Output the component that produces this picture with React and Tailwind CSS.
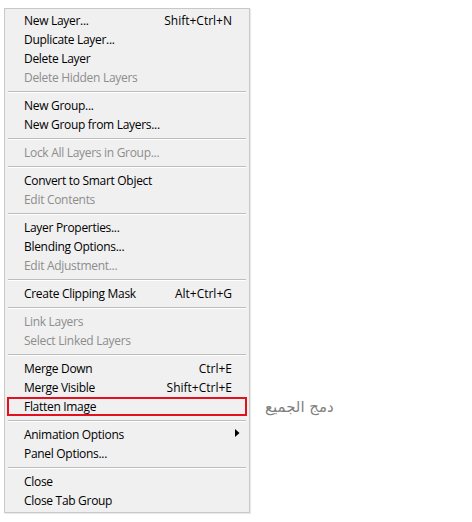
import React from "react";

const groups = [
  [
    { t: "New Layer...", s: "Shift+Ctrl+N" },
    { t: "Duplicate Layer..." },
    { t: "Delete Layer" },
    { t: "Delete Hidden Layers", d: true },
  ],
  [{ t: "New Group..." }, { t: "New Group from Layers..." }],
  [{ t: "Lock All Layers in Group...", d: true }],
  [{ t: "Convert to Smart Object" }, { t: "Edit Contents", d: true }],
  [
    { t: "Layer Properties..." },
    { t: "Blending Options..." },
    { t: "Edit Adjustment...", d: true },
  ],
  [{ t: "Create Clipping Mask", s: "Alt+Ctrl+G" }],
  [{ t: "Link Layers", d: true }, { t: "Select Linked Layers", d: true }],
  [
    { t: "Merge Down", s: "Ctrl+E" },
    { t: "Merge Visible", s: "Shift+Ctrl+E" },
    { t: "Flatten Image", h: true },
  ],
  [{ t: "Animation Options", sub: true }, { t: "Panel Options..." }],
  [{ t: "Close" }, { t: "Close Tab Group" }],
];

function Row({ item }) {
  return (
    <div
      className={
        "relative flex h-[19px] items-center pl-[19px] pr-[17px] " +
        (item.d ? "text-[#8d8d8d]" : "text-black")
      }
    >
      {item.h && (
        <div className="absolute left-[2px] right-[2px] top-0 bottom-0 border-2 border-[#e3101e]" />
      )}
      <span className="flex-1 whitespace-nowrap">{item.t}</span>
      {item.s && <span className="whitespace-nowrap tracking-normal">{item.s}</span>}
      {item.sub && (
        <svg width="5" height="8" viewBox="0 0 5 8" className="mr-[-8px] mb-[3px]">
          <path d="M0 0 L4.5 4 L0 8 Z" fill="#000" />
        </svg>
      )}
      {item.h && (
        <span
          className="absolute left-[260px] top-[-1px] whitespace-nowrap text-[15px] tracking-normal text-[#7f7f7f]"
          dir="rtl"
          style={{ fontFamily: '"DejaVu Sans", sans-serif' }}
        >
          دمج الجميع
        </span>
      )}
    </div>
  );
}

export default function App() {
  return (
    <div className="h-[522px] w-[472px] bg-white pl-[4px] pt-[8px]">
      <div
        className="w-[246px] border border-[#c8c8c8] bg-[#f0f0f0] py-[2px] text-[12px] tracking-[-0.3px] shadow-[1px_1px_1px_rgba(0,0,0,0.08)]"
        style={{ fontFamily: '"Open Sans", "Noto Sans", sans-serif' }}
      >
        {groups.map((g, i) => (
          <div key={i}>
            {i > 0 && (
              <div className="flex h-[9px] flex-col justify-center px-[3px]">
                <div className="h-px bg-[#bdbdbd]" />
                <div className="h-px bg-white" />
              </div>
            )}
            {g.map((item, j) => (
              <Row key={j} item={item} />
            ))}
          </div>
        ))}
      </div>
    </div>
  );
}
